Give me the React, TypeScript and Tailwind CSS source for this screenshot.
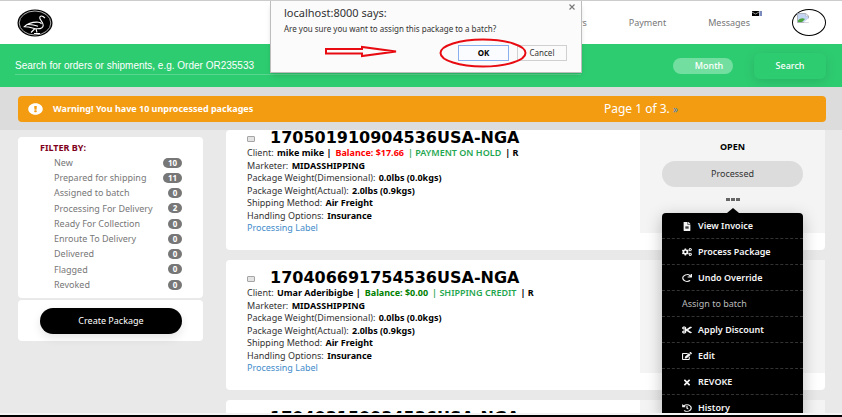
import React from "react";
import {
  FaCogs, FaCut, FaEdit, FaExclamationCircle, FaFileAlt, FaHistory, FaRedo, FaTimes,
} from "react-icons/fa";

const filters: [string, number][] = [
  ["New", 10], ["Prepared for shipping", 11], ["Assigned to batch", 0],
  ["Processing For Delivery", 2], ["Ready For Collection", 0], ["Enroute To Delivery", 0],
  ["Delivered", 0], ["Flagged", 0], ["Revoked", 0],
];

const menu = [
  { label: "View Invoice", icon: FaFileAlt, wide: false },
  { label: "Process Package", icon: FaCogs, wide: true },
  { label: "Undo Override", icon: FaRedo, wide: true },
  { label: "Assign to batch", icon: null, wide: false },
  { label: "Apply Discount", icon: FaCut, wide: true },
  { label: "Edit", icon: FaEdit, wide: true },
  { label: "REVOKE", icon: FaTimes, wide: false },
  { label: "History", icon: FaHistory, wide: true },
];

type Details = { client: string; balance: string; tone: string; note: string };
type Pkg = { id: string; details?: Details };

const packages: Pkg[] = [
  { id: "170501910904536USA-NGA", details: { client: "mike mike", balance: "$17.66", tone: "text-[#ff0000]", note: "PAYMENT ON HOLD" } },
  { id: "170406691754536USA-NGA", details: { client: "Umar Aderibigbe", balance: "$0.00", tone: "text-[#008000]", note: "SHIPPING CREDIT" } },
  { id: "170403150934536USA-NGA" },
];

function Logo() {
  return (
    <svg viewBox="0 0 36 28" className="h-7 w-9" role="img" aria-label="Home">
      <ellipse cx="18" cy="14" rx="17.5" ry="13.5" fill="#000" />
      <ellipse cx="18" cy="14" rx="15.8" ry="12" fill="none" stroke="#fff" strokeWidth="0.7" />
      <path
        d="M28 9 26 7.500c-1.800-1.200-3.600-.2-3.200 1.700.4 2 3.400 4.200 3.400 7 0 2.400-2.600 3.600-5.600 3.600-4.600 0-6.600-2.200-13.600-2 3.500-3.200 8.500-5 14.500-4.600 1.500.1 2.500.8 3 1.800M10 15.500c4-.3 7 .2 11 1.800M17.500 20l-3.500 3.500m5-3.500 1 3.500m-3 1h6"
        fill="none" stroke="#fff" strokeWidth="1.100" strokeLinejoin="round"
      />
    </svg>
  );
}

function Avatar() {
  return (
    <span className="flex h-[27px] w-[34px] shrink-0 items-start rounded-[50%] border border-black bg-white pt-[3px] pl-1">
      <svg viewBox="0 0 12 10" className="h-[10px] w-3" role="img" aria-label="Profile">
        <path d="M0.500 0.500h8l3 2.500v6.500h-11z" fill="#c3d5f3" stroke="#a0a4ab" strokeWidth="0.800" />
        <path d="M8.500 0.500v2.500h3z" fill="#fff" stroke="#a0a4ab" strokeWidth="0.500" />
        <path d="M1 9V7.500C3 5 6 4.500 8 6L5 9z" fill="#4ba43c" />
        <path d="M6.500 9.500 12 5v4.500z" fill="#fff" />
      </svg>
    </span>
  );
}

function Dialog() {
  return (
    <div role="dialog" aria-labelledby="dlg-title" className="absolute top-0 left-[270px] z-30 h-[72px] w-[312px] border border-t-0 border-[#bdbdbd] bg-[#fbfbfb] pt-[6px] pr-[14px] pl-[13px] text-[#333] shadow-md">
      <button aria-label="Close" className="absolute top-[2px] right-[5px] text-[#777]">
        <svg viewBox="0 0 8 8" className="size-2"><path d="m1.500 1.500 5 5m0-5-5 5" stroke="currentColor" strokeWidth="1.100" /></svg>
      </button>
      <h2 id="dlg-title" className="text-[11px] leading-3">localhost:8000 says:</h2>
      <p className="mt-1 text-[8px] leading-3">Are you sure you want to assign this package to a batch?</p>
      <div className="mt-[10px] flex justify-end gap-2 text-[8px]">
        <button className="h-4 w-[51px] border border-[#8ab0ee] bg-[#fafcff] font-bold text-black">OK</button>
        <button className="h-4 w-[50px] border border-[#d0d0d0]">Cancel</button>
      </div>
      <svg viewBox="0 0 230 32" className="absolute top-[36px] left-[52px] h-8 w-[230px]" fill="none" stroke="#e80c12" aria-hidden="true">
        <path d="M3 12h36V10l34 4.500L39 19v-2.500H3z" strokeWidth="2" />
        <ellipse cx="160" cy="16" rx="42.500" ry="13.500" strokeWidth="2" />
      </svg>
    </div>
  );
}

function ActionMenu() {
  return (
    <div className="absolute top-[83px] right-[22px] left-[22px] z-10 rounded-t-sm bg-black text-[#f5f5f5] shadow-[0_4px_16px_rgba(0,0,0,0.25)]">
      <span className="absolute -top-[5px] left-1/2 -translate-x-1/2 border-x-6 border-b-5 border-x-transparent border-b-black" />
      {menu.map(({ label, icon: Icon, wide }) => (
        <button
          key={label}
          className={"flex h-[26px] w-full items-center border-b border-dashed border-[#333] pt-px pl-5 text-[9px] " + (Icon ? "gap-[6px] font-semibold" : "text-[#bbb]")}
        >
          {Icon && <Icon className={wide ? "h-2 w-[10px]" : "h-[9px] w-[10px]"} preserveAspectRatio={wide ? "none" : "xMidYMid"} />}
          {label}
        </button>
      ))}
    </div>
  );
}

function Row({ name, value }: { name: string; value: string }) {
  return <div>{name}: <b className="ml-px text-black">{value}</b></div>;
}

function PackageDetails({ client, balance, tone, note }: Details) {
  return (
    <div className="flex h-[87px] flex-col justify-between">
      <div>
        Client: <b className="ml-px text-black">{client} |</b>
        <b className={"ml-1 " + tone}>Balance: {balance}</b>
        <span className="ml-1 font-semibold text-[#1fa650]">| {note}</span>
        <b className="ml-1 text-black">| R</b>
      </div>
      <Row name="Marketer" value="MIDASSHIPPING" />
      <Row name="Package Weight(Dimensional)" value="0.0lbs (0.0kgs)" />
      <Row name="Package Weight(Actual)" value="2.0lbs (0.9kgs)" />
      <Row name="Shipping Method" value="Air Freight" />
      <Row name="Handling Options" value="Insurance" />
      <a href="#label" className="text-[#428bca]">Processing Label</a>
    </div>
  );
}

function PackageCard({ pkg, first }: { pkg: Pkg; first: boolean }) {
  return (
    <article className={"flex shrink-0 rounded-sm bg-white " + (first ? "h-[120px]" : "h-[130px] pt-[10px]")}>
      <div className="min-w-0 flex-1 pl-[21px] text-[9px] leading-3 whitespace-nowrap text-[#333]">
        <label className="flex h-[17px] items-center gap-[15px] pb-[2px] font-['DejaVu_Sans',sans-serif] text-base leading-[15px] font-bold text-black">
          <input type="checkbox" className="mt-[2px] h-[6px] w-2 appearance-none rounded-[1px] border border-[#a5a5a5] bg-[#e4e4e4]" />
          {pkg.id}
        </label>
        {pkg.details && <PackageDetails {...pkg.details} />}
      </div>
      <div className={"relative w-[185px] bg-[#f4f4f4] px-[22px] " + (first ? "h-[103px]" : "-mt-[10px] h-[113px]")}>
        {first && (
          <>
            <div className="pt-[11px] text-center text-[9px] leading-3 font-bold">OPEN</div>
            <button className="mt-2 h-[26px] w-full rounded-full bg-[#dcdcdc] text-[9px] text-[#333]">Processed</button>
            <button aria-label="More actions" className="mx-auto mt-[11px] flex gap-px">
              <i className="h-[3px] w-1 bg-[#666]" /><i className="h-[3px] w-1 bg-[#666]" /><i className="h-[3px] w-1 bg-[#666]" />
            </button>
            <ActionMenu />
          </>
        )}
      </div>
    </article>
  );
}

export default function App() {
  return (
    <div className="relative flex h-screen flex-col overflow-hidden border-t border-[#ccc] bg-[#e9e9e9] font-['Noto_Sans',sans-serif] text-black">
      <header className="flex h-[43px] shrink-0 items-center bg-white pr-4 pl-[17px] text-[9px] text-[#777]">
        <a href="#home"><Logo /></a>
        <nav className="ml-auto flex items-center">
          <a href="#orders" className="mr-[42px]">Orders</a>
          <a href="#payment" className="mr-[42px]">Payment</a>
          <a href="#messages" className="relative mr-[42px]">
            Messages
            <svg viewBox="0 0 10 5" className="absolute -top-[5px] -right-3 h-[5px] w-[10px]"><path d="M0 0h7v5H0z" /><path d="m0 1 3.500 2L7 1" stroke="#fff" strokeWidth="0.600" fill="none" /><path d="M7.500 0H10v5H7.500z" fill="#7b8bbd" /></svg>
          </a>
        </nav>
        <Avatar />
      </header>
      <form className="flex h-[43px] shrink-0 items-center bg-[#2ecc71] pr-4 pl-[15px]">
        <input aria-label="Search" placeholder="Search for orders or shipments, e.g. Order OR235533" className="mr-[92px] h-[18px] min-w-0 flex-1 border-b border-[#58d68d] font-['Liberation_Sans',sans-serif] text-[10px] text-white outline-none placeholder:text-white" />
        <button type="button" className="mr-[21px] h-4 w-[60px] rounded-full bg-[#72dfa0] pl-3 text-[9px] leading-4 font-medium text-white">Month</button>
        <button type="button" className="h-[26px] w-[72px] rounded-md bg-[#2ecc71] text-[9px] font-medium text-white shadow-[0_3px_12px_rgba(0,0,0,0.12)]">Search</button>
      </form>
      <div className="shrink-0 bg-[#dcdcdc] pt-[9px] pr-4 pb-2 pl-[18px]">
        <div className="flex h-[26px] items-center rounded-sm bg-[#f39c12] pl-[10px] text-white">
          <FaExclamationCircle className="h-3 w-[15px]" preserveAspectRatio="none" />
          <b className="ml-[10px] flex-1 text-[9px]">Warning! You have 10 unprocessed packages</b>
          <span className="w-[222px] text-[12px]">Page 1 of 3. <a href="#next" className="text-[10px] text-[#428bca]">»</a></span>
        </div>
      </div>
      <main className="flex min-h-0 flex-1 gap-[23px] overflow-hidden pr-[17px] pl-[18px]">
        <aside className="w-[185px] shrink-0 pt-[7px] text-[9px]">
          <section className="rounded-sm bg-white pt-1 pr-[21px] pb-[6px] pl-[22px]">
            <h3 className="leading-[14px] font-bold text-[#800020]">FILTER BY:</h3>
            <ul className="flex h-[137px] flex-col justify-between pl-[14px] text-[#777]">
              {filters.map(([name, n]) => (
                <li key={name} className="flex h-[15px] items-center justify-between">
                  <a href="#filter">{name}</a>
                  <span className={"h-[10px] rounded-full bg-[#777] text-center text-[8px] leading-[10px] font-bold text-white " + (n > 9 ? "w-[19px]" : "w-[14px]")}>{n}</span>
                </li>
              ))}
            </ul>
          </section>
          <section className="mt-[2px] rounded-sm bg-white pt-2 pr-[21px] pb-[7px] pl-[22px]">
            <button className="h-[26px] w-full rounded-full bg-black text-white shadow-[0_4px_10px_rgba(0,0,0,0.1)]">Create Package</button>
          </section>
        </aside>
        <div className="flex min-w-0 flex-1 flex-col gap-[10px]">
          {packages.map((p, i) => <PackageCard key={p.id} pkg={p} first={i === 0} />)}
        </div>
      </main>
      <footer className="h-1 shrink-0 border-t-2 border-b-2 border-t-[#f4f4f4] border-b-black" />
      <Dialog />
    </div>
  );
}
